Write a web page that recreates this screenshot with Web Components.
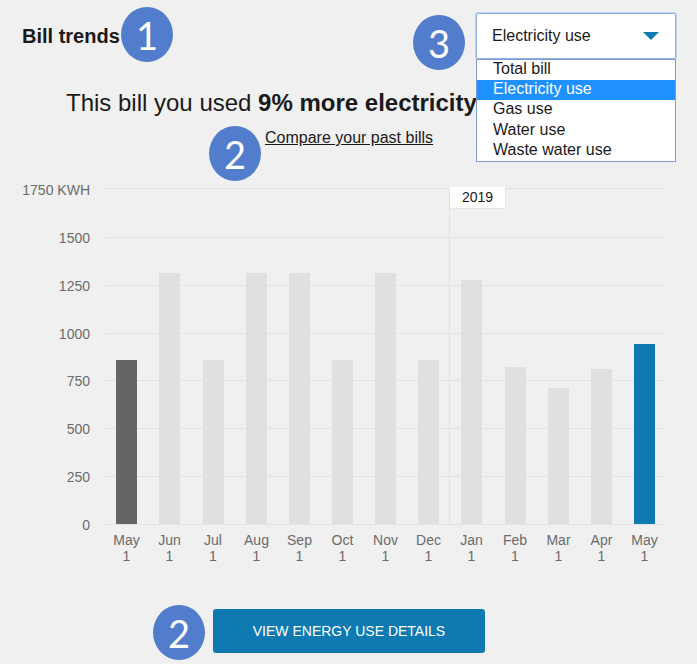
<!DOCTYPE html>
<html>
<head>
<meta charset="utf-8">
<title>Bill trends</title>
<style>
  html, body { margin: 0; height: 100%; }
  body { background: #f0f0f0; font-family: "Liberation Sans", Arial, sans-serif; color: #1a1a1a; overflow: hidden; }
</style>
</head>
<body>
<bill-page>
  <note-badge slot="badges" style="left:121px;top:7px">1</note-badge>
  <note-badge slot="badges" style="left:209px;top:126px">2</note-badge>
  <note-badge slot="badges" style="left:413px;top:15px">3</note-badge>
  <note-badge slot="badges" style="left:153px;top:605px">2</note-badge>
</bill-page>

<script>
// numbered callout drawn over the screenshot
class NoteBadge extends HTMLElement {
  constructor() {
    super();
    this.attachShadow({ mode: 'open' });
    this.shadowRoot.innerHTML = `
    <style>
      :host {
        position: absolute;
        display: flex;
        align-items: center;
        justify-content: center;
        width: 52px;
        height: 55px;
        border-radius: 50%;
        background: #517dcc;
        color: #fff;
        font: 38px/1 Lato, sans-serif;
      }
    </style>
    <slot></slot>
    `;
  }
}

class UsageSelect extends HTMLElement {
  constructor() {
    super();
    this.attachShadow({ mode: 'open' });
    this.shadowRoot.innerHTML = `
    <style>
      :host { position: absolute; left: 476px; top: 13px; width: 200px; display: block; font-size: 16px; }
      .box {
        box-sizing: border-box;
        height: 46px;
        display: flex;
        align-items: center;
        justify-content: space-between;
        padding: 0 16px 0 15px;
        background: #fff;
        border: 1px solid #8fb0e6;
        border-radius: 2px;
        box-shadow: 0 0 0 1px rgba(143, 176, 230, .45);
      }
      .arrow { width: 0; height: 0; border: 8px solid transparent; border-top: 8px solid #0f7ab1; border-bottom: 0; }
      ul {
        list-style: none;
        margin: 0;
        padding: 0;
        background: #fff;
        border: 1px solid #7f9bd3;
        box-sizing: border-box;
        height: 103px;
        position: relative;
      }
      li { height: 20.2px; line-height: 17px; padding-left: 16px; }
      li.on { background: #1e90ff; color: #fff; }
    </style>
    <div class="box"><span>Electricity use</span><span class="arrow"></span></div>
    <ul>
      <li>Total bill</li>
      <li class="on">Electricity use</li>
      <li>Gas use</li>
      <li>Water use</li>
      <li>Waste water use</li>
    </ul>
    `;
  }
}

class UsageChart extends HTMLElement {
  constructor() {
    super();
    this.attachShadow({ mode: 'open' });
    const ticks = ['1750 KWH', '1500', '1250', '1000', '750', '500', '250', '0'];
    const months = ['May', 'Jun', 'Jul', 'Aug', 'Sep', 'Oct', 'Nov', 'Dec', 'Jan', 'Feb', 'Mar', 'Apr', 'May'];
    const heights = [164, 251, 164, 251, 251, 164, 251, 164, 244, 157, 136, 155, 180];

    const bars = heights.map((h, i) => {
      let cls = '';
      if (i === 0) cls = 'old';
      if (i === 12) cls = 'now';
      return `<div class="col"><div class="bar ${cls}" style="height:${h}px"></div></div>`;
    }).join('');

    this.shadowRoot.innerHTML = `
    <style>
      :host {
        --rows: 49px 48px 48px 47px 48px 48px 48px 1px;
        --cols: 43px 43px 44px 43px 43px 43px 43px 43px 43px 44px 43px 43px 43px;
        display: grid;
        grid-template-columns: 105px 561px;
        margin-top: 41px;
        color: #6b6b6b;
        font-size: 14px;
      }
      .ticks { height: 337px; display: grid; grid-template-rows: var(--rows); }
      .ticks span { height: 1px; line-height: 1px; position: relative; top: 1px; text-align: right; padding-right: 15px; }
      .ticks span:first-child { top: 2px; }
      .plot { position: relative; height: 337px; }
      .lines { position: absolute; inset: 0; display: grid; grid-template-rows: var(--rows); }
      .lines i { display: block; height: 1px; background: #e2e2e2; }
      .bars { position: absolute; inset: 0 0 1px 0; display: grid; grid-template-columns: var(--cols); }
      .col { display: flex; align-items: flex-end; justify-content: center; }
      .bar { width: 21px; background: #e0e0e0; }
      .bar.old { background: #656565; }
      .bar.now { background: #0f7ab1; }
      .year-line { position: absolute; left: 344px; top: 0; bottom: 0; width: 1px; background: #e2e2e2; }
      .year {
        position: absolute;
        left: 345px;
        top: -1px;
        box-sizing: border-box;
        width: 55px;
        height: 21px;
        line-height: 20px;
        text-align: center;
        background: #fff;
        box-shadow: 1px 1px 0 #e6e6e6;
        color: #1a1a1a;
      }
      .labels { grid-column: 2; display: grid; grid-template-columns: var(--cols); margin-top: 7px; text-align: center; line-height: 16px; }
    </style>
    <div class="ticks">${ticks.map(t => `<span>${t}</span>`).join('')}</div>
    <div class="plot">
      <div class="lines">${ticks.map(() => '<i></i>').join('')}</div>
      <div class="year-line"></div>
      <div class="bars">${bars}</div>
      <div class="year">2019</div>
    </div>
    <div class="labels">${months.map(m => `<div>${m}<br>1</div>`).join('')}</div>
    `;
  }
}

class BillPage extends HTMLElement {
  constructor() {
    super();
    this.attachShadow({ mode: 'open' });
    this.shadowRoot.innerHTML = `
    <style>
      :host { display: block; position: relative; width: 697px; height: 664px; }
      h2 { margin: 0; padding: 26px 0 0 22px; font-size: 20px; line-height: 20px; font-weight: bold; }
      h1 { margin: 43px 0 0 66px; font-size: 24px; line-height: 28px; font-weight: normal; white-space: nowrap; }
      .compare { display: block; margin: 12px 0 0 265px; width: max-content; font-size: 16px; line-height: 18px; color: #1a1a1a; }
      .action { display: flex; justify-content: flex-start; margin: 45px 0 0 213px; }
      .action a {
        width: 272px;
        height: 44px;
        display: flex;
        align-items: center;
        justify-content: center;
        background: #0f7ab1;
        border-radius: 3px;
        color: #fff;
        font-size: 14px;
        text-decoration: none;
      }
    </style>
    <h2>Bill trends</h2>
    <h1>This bill you used <b>9% more electricity</b></h1>
    <a class="compare" href="#">Compare your past bills</a>
    <usage-chart></usage-chart>
    <div class="action"><a href="#">VIEW ENERGY USE DETAILS</a></div>
    <usage-select></usage-select>
    <slot name="badges"></slot>
    `;
  }
}

customElements.define('note-badge', NoteBadge);
customElements.define('usage-select', UsageSelect);
customElements.define('usage-chart', UsageChart);
customElements.define('bill-page', BillPage);
</script>
</body>
</html>
